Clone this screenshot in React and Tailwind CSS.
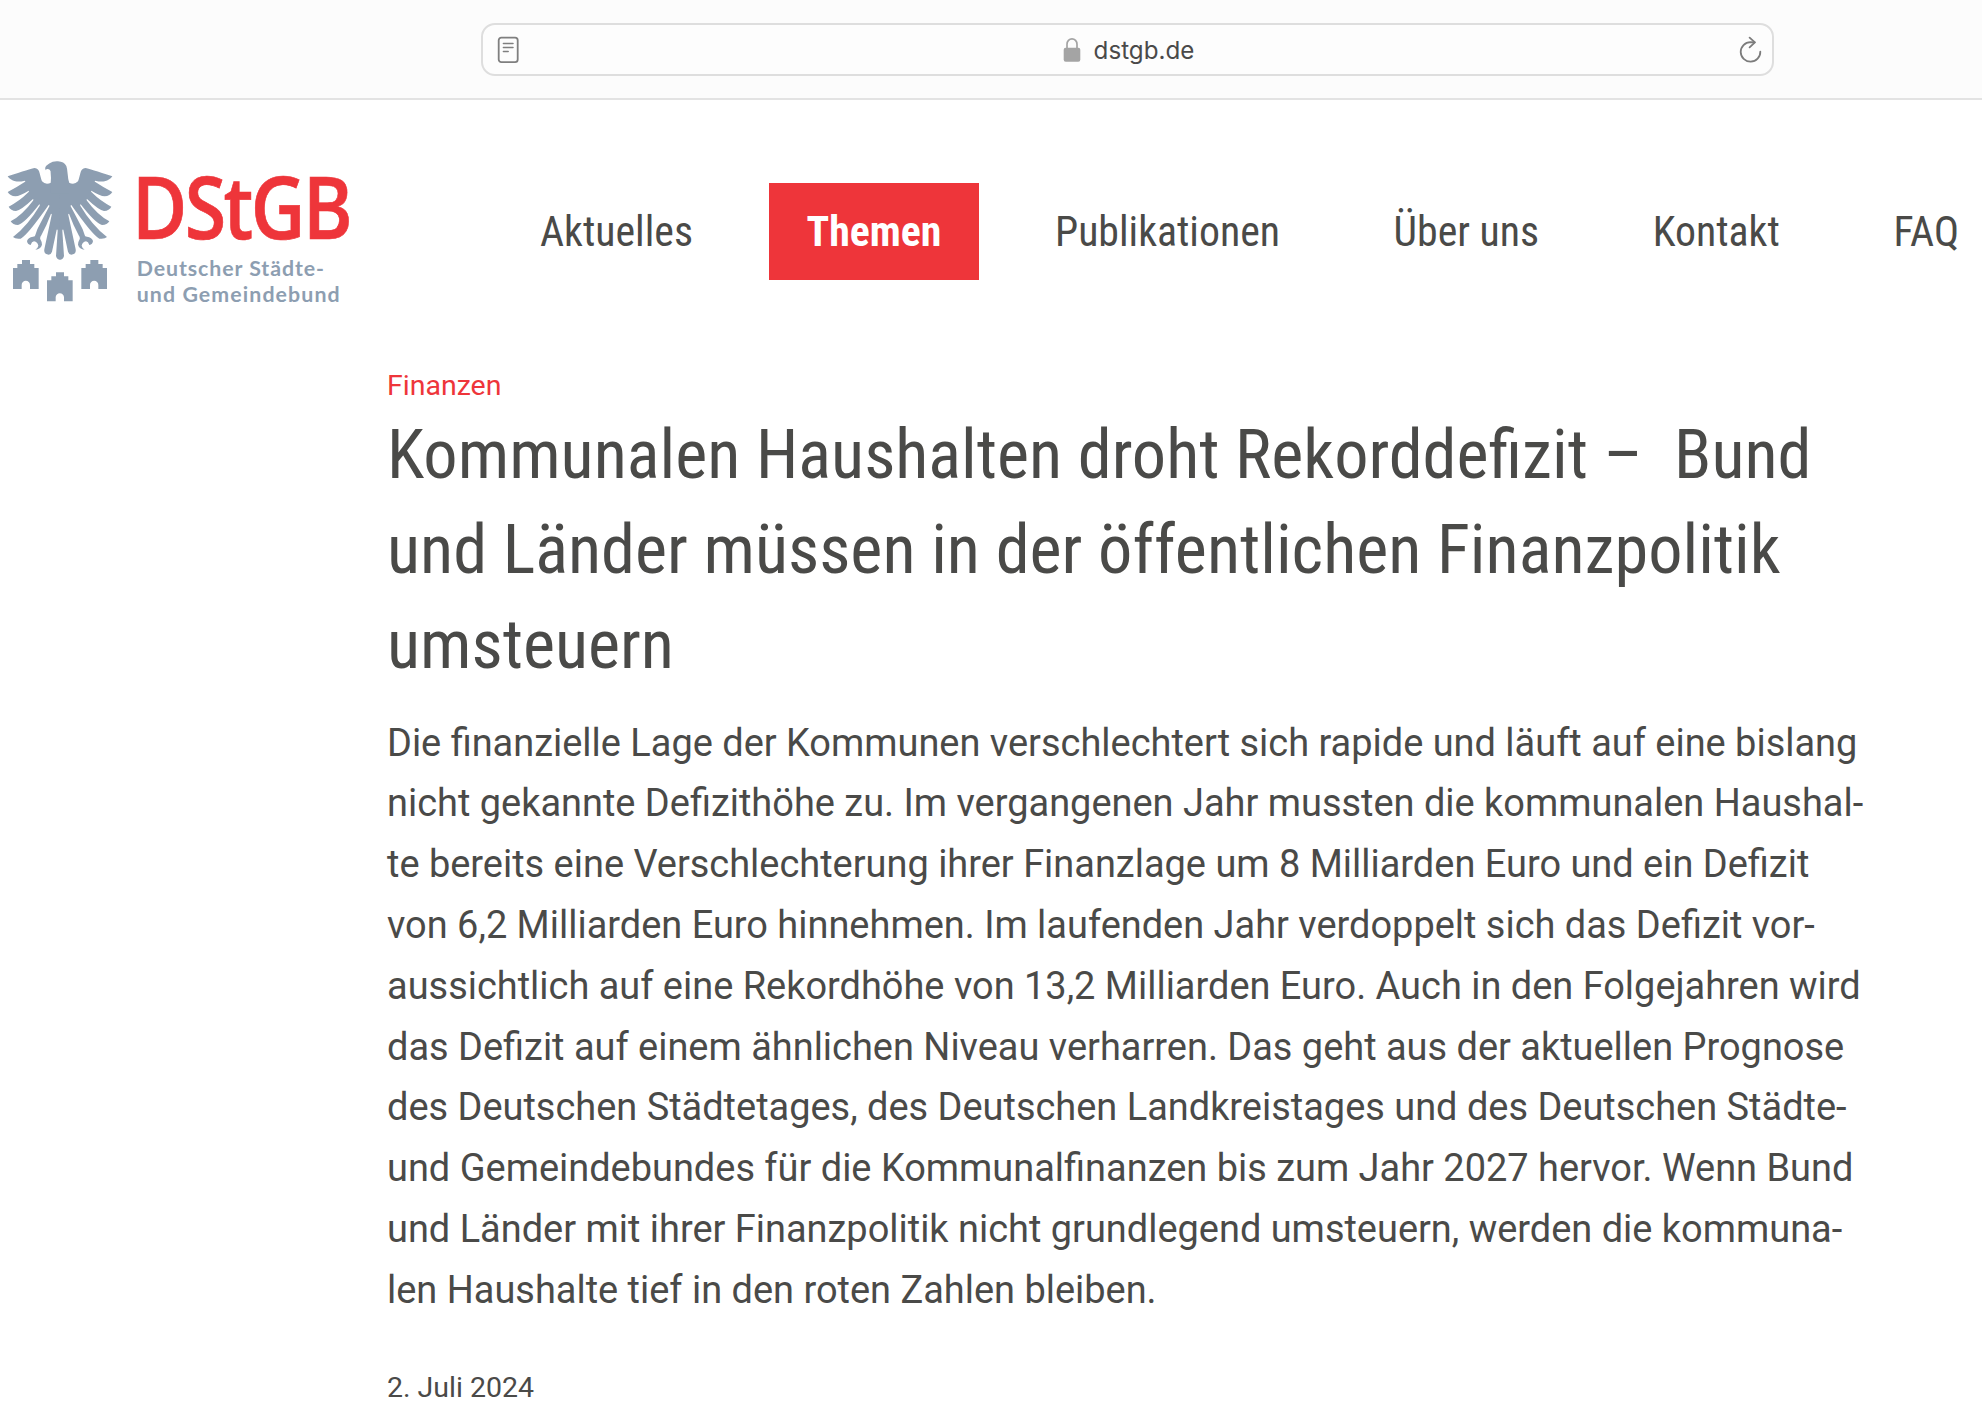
import React from "react";

const NAV = [
  { label: "Aktuelles" },
  { label: "Themen", active: true },
  { label: "Publikationen" },
  { label: "Über uns" },
  { label: "Kontakt" },
  { label: "FAQ" },
];

const HEADLINE = [
  "Kommunalen Haushalten droht Rekorddefizit –\u00a0 Bund",
  "und Länder müssen in der öffentlichen Finanzpolitik",
  "umsteuern",
];

const LEAD = [
  "Die finanzielle Lage der Kommunen verschlechtert sich rapide und läuft auf eine bislang",
  "nicht gekannte Defizithöhe zu. Im vergangenen Jahr mussten die kommunalen Haushal-",
  "te bereits eine Verschlechterung ihrer Finanzlage um 8 Milliarden Euro und ein Defizit",
  "von 6,2 Milliarden Euro hinnehmen. Im laufenden Jahr verdoppelt sich das Defizit vor-",
  "aussichtlich auf eine Rekordhöhe von 13,2 Milliarden Euro. Auch in den Folgejahren wird",
  "das Defizit auf einem ähnlichen Niveau verharren. Das geht aus der aktuellen Prognose",
  "des Deutschen Städtetages, des Deutschen Landkreistages und des Deutschen Städte-",
  "und Gemeindebundes für die Kommunalfinanzen bis zum Jahr 2027 hervor. Wenn Bund",
  "und Länder mit ihrer Finanzpolitik nicht grundlegend umsteuern, werden die kommuna-",
  "len Haushalte tief in den roten Zahlen bleiben.",
];

const WING =
  "M181 88 L153 98 Q137 106 126 94 Q124 90 119 70 Q116 55 104 54 Q92 56 23 79 Q30 90 46 94 Q58 96 75 92 Q77 94 74 96 Q50 112 23 126 Q30 138 46 139 Q60 138 86 122 Q88 124 85 127 Q58 154 26 170 Q32 182 48 183 Q64 180 99 147 Q101 149 99 152 Q68 194 32 214 Q38 225 54 225 Q74 220 118 163 Q120 164 119 167 Q84 226 39 261 Q46 268 62 266 Q82 256 146 165 Q149 166 148 169 Q124 214 112 238 L106 255 Q106 260 99 260 Q84 262 81 273 Q82 283 92 285 Q95 275 102 274 Q113 276 115 287 Q113 296 106 299 Q122 298 126 284 Q126 276 121 268 Q119 262 124 256 Q140 226 153 191 Q156 192 155 195 L133 298 Q131 310 141 313 Q152 317 156 305 L170 239 Q173 238 173 242 L168 318 Q170 329 181 329 Z";

const HEAD =
  "M152 100 Q154 84 152 70 Q153 62 149 59 Q145 56 141 57 Q138 58 137 61 Q133 54 138 48 Q144 44 149 40 Q158 33 174 34 Q192 35 199 48 Q202 56 203 72 Q204 88 208 100 L208 130 L152 130 Z";

const TOWER =
  "M66 330 H90 V342 H103 V354 H116 V417 H90 V405 A12.5 12.5 0 0 0 65 405 V417 H39 V354 H52 V342 H66 Z";

function Logo() {
  return (
    <svg viewBox="0 0 1080 480" className="h-[160px] w-[360px] shrink-0 overflow-visible">
      <g fill="#8d9eb1">
        <path d={WING} />
        <path d={WING} transform="matrix(-1 0 0 1 360 0)" />
        <path d={HEAD} />
        <path d={TOWER} />
        <path d={TOWER} transform="translate(102 37)" />
        <path d={TOWER} transform="translate(205 0)" />
      </g>
      <text
        x="396"
        y="267"
        textLength="654"
        lengthAdjust="spacingAndGlyphs"
        fill="#ee353a"
        stroke="#ee353a"
        strokeWidth="2"
        className="font-['Open_Sans',sans-serif] text-[260px] font-semibold tracking-[-9px]"
      >
        DStGB
      </text>
      <g fill="#8d9eb1" className="font-['Lato',sans-serif] text-[64px] font-bold">
        <text x="410" y="377" textLength="562" lengthAdjust="spacing">
          Deutscher Städte-
        </text>
        <text x="410" y="455" textLength="609" lengthAdjust="spacing">
          und Gemeindebund
        </text>
      </g>
    </svg>
  );
}

function ReaderIcon() {
  return (
    <svg viewBox="0 0 22 28" fill="none" stroke="#7f7f7f" strokeLinecap="round" className="h-7 w-[22px]">
      <rect x="1.7" y="1.6" width="19" height="24.6" rx="2.6" strokeWidth="1.8" />
      <path d="M6.4 7.4 H16 M6.4 11.4 H16 M6.4 15.4 H11.2" strokeWidth="1.5" />
    </svg>
  );
}

function LockIcon() {
  return (
    <svg viewBox="0 0 18 26" className="h-[26px] w-[18px]">
      <path d="M4 12 V7.2 A5 5.4 0 0 1 14 7.2 V12" fill="none" stroke="#a4a4a4" strokeWidth="1.7" />
      <rect x="0.7" y="10.8" width="16.6" height="14" rx="2" fill="#a4a4a4" />
    </svg>
  );
}

function ReloadIcon() {
  return (
    <svg
      viewBox="0 0 24 28"
      fill="none"
      stroke="#7c7c7c"
      strokeWidth="1.8"
      strokeLinecap="round"
      strokeLinejoin="round"
      className="h-7 w-6"
    >
      <path d="M22.3 15.6 A9.8 9.8 0 1 1 12.5 6.1 L16.7 6.3" />
      <path d="M11.6 1.6 L16.9 6.4 L11.6 11.4" />
    </svg>
  );
}

function AddressBar() {
  return (
    <header className="flex h-[100px] items-start border-b-2 border-[#e3e3e3] bg-[#fcfcfc] pt-[23px] pl-[481px]">
      <div className="flex h-[53px] w-[1293px] items-center justify-between rounded-[14px] border-2 border-[#dedede] bg-[#fdfdfd] pr-[10px] pl-[14px]">
        <ReaderIcon />
        <div className="flex items-center gap-[13px]">
          <LockIcon />
          <span className="pt-0.5 font-['Inter',sans-serif] text-[24.2px] leading-[30px] text-[#4a4a4a]">dstgb.de</span>
        </div>
        <ReloadIcon />
      </div>
    </header>
  );
}

function NavItem({ label, active }) {
  return (
    <a
      className={
        active
          ? "flex h-[97px] items-center bg-[#ee353a] px-[38px] font-bold text-white"
          : "flex h-[97px] items-center px-[38px] text-[#4a4a48]"
      }
    >
      {label}
    </a>
  );
}

export default function App() {
  return (
    <div className="h-[1409px] w-[1982px] overflow-hidden bg-white font-['Roboto',sans-serif] text-[#4a4a48]">
      <AddressBar />
      <div className="flex h-[263px] items-start pt-[50px]">
        <Logo />
        <nav className="mt-[33px] ml-[142px] flex gap-[37.6px] font-['Roboto_Condensed',Roboto,sans-serif] text-[41.8px] leading-none whitespace-nowrap">
          {NAV.map((item) => (
            <NavItem key={item.label} {...item} />
          ))}
        </nav>
      </div>
      <article className="pl-[387px] whitespace-nowrap">
        <p className="text-[28.5px] leading-[45px] text-[#ee353a]">Finanzen</p>
        <h1 className="font-['Roboto_Condensed',Roboto,sans-serif] text-[68.35px] leading-[95.2px]">
          {HEADLINE.map((line) => (
            <span key={line} className="block">
              {line}
            </span>
          ))}
        </h1>
        <p className="mt-[19px] text-[37.95px] leading-[60.8px]">
          {LEAD.map((line) => (
            <span key={line} className="block">
              {line}
            </span>
          ))}
        </p>
        <p className="mt-[44px] text-[28.5px] leading-[45px]">2. Juli 2024</p>
      </article>
    </div>
  );
}
